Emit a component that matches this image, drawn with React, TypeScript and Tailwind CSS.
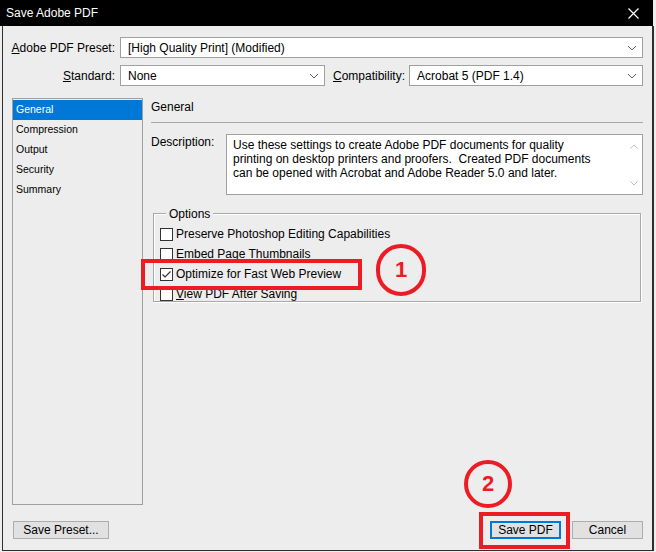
import React from 'react';

const Chevron = () => (
  <svg width="10" height="6" viewBox="0 0 10 6" className="shrink-0">
    <path d="M1 1 L5 5 L9 1" fill="none" stroke="#606060" strokeWidth="1" />
  </svg>
);

const Select = ({ value, width }: { value: string; width: string }) => (
  <div className={`${width} h-[21px] bg-white border border-[#a0a0a0] flex items-center justify-between pl-[7px] pr-[5px]`}>
    <span className="text-[12px] text-black">{value}</span>
    <Chevron />
  </div>
);

const Checkbox = ({ checked }: { checked?: boolean }) => (
  <div className="w-[13px] h-[13px] border border-[#333] bg-white flex items-center justify-center shrink-0">
    {checked && (
      <svg width="11" height="11" viewBox="0 0 11 11">
        <path d="M1.5 5.5 L4 8 L9.5 2.5" fill="none" stroke="#333" strokeWidth="1.2" />
      </svg>
    )}
  </div>
);

const options = [
  { label: 'Preserve Photoshop Editing Capabilities', checked: false },
  { label: 'Embed Page Thumbnails', checked: false },
  { label: 'Optimize for Fast Web Preview', checked: true },
  { label: 'View PDF After Saving', checked: false, key: true },
];

const sections = ['General', 'Compression', 'Output', 'Security', 'Summary'];

export default function App() {
  return (
    <div className="w-[656px] h-[552px] bg-[#eeeeee] relative overflow-hidden font-['Liberation_Sans',Arial,sans-serif] text-black">
      {/* Title bar */}
      <div className="w-[653px] h-[26px] bg-black flex items-center justify-between pl-[6px] pr-[14px]">
        <span className="text-white text-[12px]">Save Adobe PDF</span>
        <svg width="11" height="11" viewBox="0 0 11 11">
          <path d="M0.5 0.5 L10.5 10.5 M10.5 0.5 L0.5 10.5" stroke="#fff" strokeWidth="1.2" />
        </svg>
      </div>

      {/* Body */}
      <div className="ml-[2px] w-[652px] h-[525px] bg-[#ededed] border-l border-r-2 border-b border-[#2e2e2e] flex flex-col">
        {/* Preset */}
        <div className="flex items-center mt-[11px]">
          <span className="w-[113px] text-right text-[12px] pr-[1px]">
            <span className="underline">A</span>dobe PDF Preset:
          </span>
          <div className="ml-[4px]">
            <Select value="[High Quality Print] (Modified)" width="w-[523px]" />
          </div>
        </div>

        {/* Standard / Compatibility */}
        <div className="flex items-center mt-[7px]">
          <span className="w-[113px] text-right text-[12px] pr-[1px]">
            <span className="underline">S</span>tandard:
          </span>
          <div className="ml-[4px]">
            <Select value="None" width="w-[205px]" />
          </div>
          <span className="ml-[8px] text-[12px]">
            <span className="underline">C</span>ompatibility:
          </span>
          <div className="ml-[4px]">
            <Select value="Acrobat 5 (PDF 1.4)" width="w-[234px]" />
          </div>
        </div>

        {/* Main */}
        <div className="flex mt-[12px] ml-[9px]">
          <div className="w-[131px] h-[407px] border border-[#a0a0a0] flex flex-col pt-[1px]">
            {sections.map((s, i) => (
              <div
                key={s}
                className={`h-[20px] flex items-center pl-[3px] text-[10.5px] ${i === 0 ? 'bg-[#0078d7] text-white' : ''}`}
              >
                {s}
              </div>
            ))}
          </div>

          <div className="ml-[8px] w-[492px] flex flex-col">
            <div className="h-[18px] flex items-center text-[12px]">General</div>
            <div className="mt-[6px] border-t border-[#a8a8a8]" />

            <div className="flex mt-[11px]">
              <span className="text-[12px] w-[75px] -mt-[1px]">Description:</span>
              <div className="w-[417px] h-[61px] bg-white border border-[#a0a0a0] flex">
                <div className="flex-1 pl-[6px] pt-[3px] text-[12px] leading-[14px]">
                  Use these settings to create Adobe PDF documents for quality
                  <br />
                  printing on desktop printers and proofers.&nbsp; Created PDF documents
                  <br />
                  can be opened with Acrobat and Adobe Reader 5.0 and later.
                </div>
                <div className="w-[16px] flex flex-col justify-between items-center pt-[9px] pb-[8px]">
                  <svg width="8" height="5" viewBox="0 0 8 5">
                    <path d="M0.5 4.5 L4 1 L7.5 4.5" fill="none" stroke="#bdbdbd" />
                  </svg>
                  <svg width="8" height="5" viewBox="0 0 8 5">
                    <path d="M0.5 0.5 L4 4 L7.5 0.5" fill="none" stroke="#bdbdbd" />
                  </svg>
                </div>
              </div>
            </div>

            {/* Options group */}
            <div className="relative mt-[18px] ml-[2px] w-[488px] h-[89px] border border-[#a8a8a8] shadow-[1px_1px_0_#fff,inset_1px_1px_0_#fff]">
              <span className="absolute -top-[9px] left-[12px] bg-[#ededed] px-[3px] text-[12px]">Options</span>
              <div className="flex flex-col pt-[10px] pl-[6px]">
                {options.map((o) => (
                  <div key={o.label} className="h-[20px] flex items-center">
                    <Checkbox checked={o.checked} />
                    <span className="ml-[3px] text-[12px]">
                      {o.key ? (
                        <>
                          <span className="underline">V</span>iew PDF After Saving
                        </>
                      ) : (
                        o.label
                      )}
                    </span>
                  </div>
                ))}
              </div>
            </div>
          </div>
        </div>

        {/* Buttons */}
        <div className="flex mt-[16px] ml-[10px]">
          <button className="w-[96px] h-[18px] bg-[#e1e1e1] border border-[#adadad] text-[12px] flex items-center justify-center">
            Save Preset...
          </button>
          <div className="flex-1" />
          <button className="w-[71px] h-[18px] bg-[#e1e1e1] border-2 border-[#0078d7] text-[12px] flex items-center justify-center">
            Save PDF
          </button>
          <button className="ml-[11px] mr-[9px] w-[71px] h-[18px] bg-[#e1e1e1] border border-[#adadad] text-[12px] flex items-center justify-center">
            Cancel
          </button>
        </div>
      </div>

      {/* Annotations */}
      <div className="absolute left-[141px] top-[259px] w-[221px] h-[31px] border-[4px] border-[#ed1c24]" />
      <div className="absolute left-[376px] top-[244px] w-[50px] h-[52px] rounded-full border-[4px] border-[#ed1c24] flex items-center justify-center">
        <span className="text-[#ed1c24] text-[22px] font-bold leading-none">1</span>
      </div>
      <div className="absolute left-[464px] top-[460px] w-[48px] h-[48px] rounded-full border-[4px] border-[#ed1c24] flex items-center justify-center">
        <span className="text-[#ed1c24] text-[22px] font-bold leading-none">2</span>
      </div>
      <div className="absolute left-[479px] top-[512px] w-[91px] h-[37px] border-[4px] border-[#ed1c24]" />
    </div>
  );
}
